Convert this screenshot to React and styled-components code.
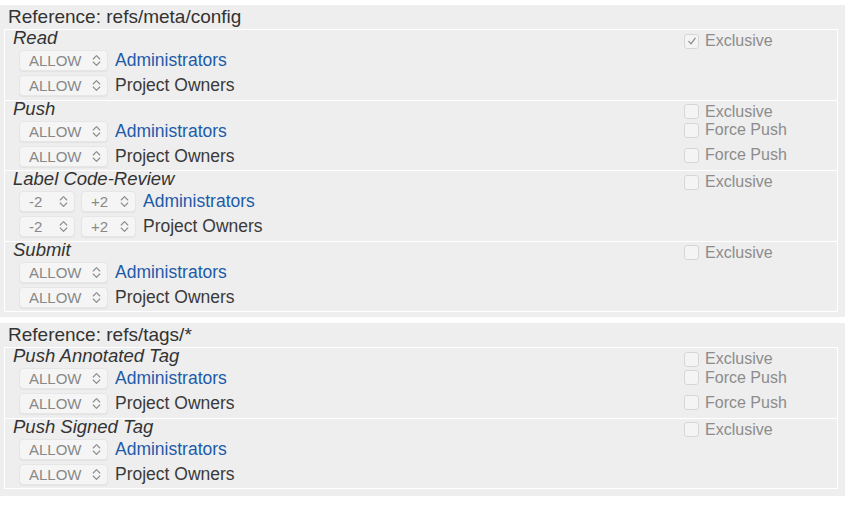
import React from 'react'
import styled, { createGlobalStyle } from 'styled-components'

const sections = [
    {
        ref: 'refs/meta/config',
        permissions: [
            { name: 'Read', exclusive: true },
            { name: 'Push', force: true },
            { name: 'Label Code-Review', range: true },
            { name: 'Submit' },
        ],
    },
    {
        ref: 'refs/tags/*',
        permissions: [
            { name: 'Push Annotated Tag', force: true },
            { name: 'Push Signed Tag' },
        ],
    },
]

const groups = [
    { name: 'Administrators', link: true },
    { name: 'Project Owners', link: false },
]

const GlobalStyle = createGlobalStyle`
    html, body {
        margin: 0;
        background: #ffffff;
    }
    body {
        padding: 5px 4px 0 0;
        font-family: "Liberation Sans", Arial, sans-serif;
        color: #3a3a3a;
    }
`

const Chevron = () => (
    <svg width="9" height="13" viewBox="0 0 9 13" fill="none" stroke="#8a8a8a" strokeWidth="1.1" strokeLinecap="round" strokeLinejoin="round">
        <path d="M1.2 5 L4.5 1.6 L7.8 5" />
        <path d="M1.2 8 L4.5 11.4 L7.8 8" />
    </svg>
)

const Check = () => (
    <svg width="12" height="12" viewBox="0 0 12 12" fill="none" stroke="#8a8a8a" strokeWidth="1.2" strokeLinecap="round" strokeLinejoin="round">
        <path d="M2.8 6.4 L5 8.8 L9.2 3.2" />
    </svg>
)

const Checkbox = ({ label, checked }) => (
    <CheckItem>
        <Box>{checked && <Check />}</Box>
        <span>{label}</span>
    </CheckItem>
)

const Select = ({ value, width }) => (
    <SelectBox $width={width}>
        <span>{value}</span>
        <Chevron />
    </SelectBox>
)

const Permission = ({ perm }) => (
    <Group>
        <TitleRow>
            <Title>{perm.name}</Title>
            <Checkbox label="Exclusive" checked={perm.exclusive} />
        </TitleRow>
        {groups.map((g) => (
            <Row key={g.name}>
                <RuleMain>
                    {perm.range ? (
                        <>
                            <Select value="-2" width={56} />
                            <Select value="+2" width={55} />
                        </>
                    ) : (
                        <Select value="ALLOW" width={89} />
                    )}
                    <GroupName $link={g.link}>{g.name}</GroupName>
                </RuleMain>
                {perm.force && <Checkbox label="Force Push" />}
            </Row>
        ))}
    </Group>
)

export default function App() {
    return (
        <>
            <GlobalStyle />
            {sections.map((s) => (
                <Section key={s.ref}>
                    <Header>Reference: {s.ref}</Header>
                    <Panel>
                        {s.permissions.map((p) => (
                            <Permission key={p.name} perm={p} />
                        ))}
                    </Panel>
                </Section>
            ))}
        </>
    )
}

const Section = styled.section`
    background: #eeeeee;
    padding: 0 7px 5px 4px;
    margin-bottom: 6px;

    &:last-child{
        padding-bottom: 7px;
        margin-bottom: 0;
    }
`

const Header = styled.div`
    height: 24px;
    line-height: 24px;
    padding-left: 4px;
    font-size: 19px;
    color: #333333;
`

const Panel = styled.div`
    border: 1px solid #ffffff;
    background: #eeeeee;
`

const Group = styled.div`
    height: 69.5px;
    border-bottom: 1px solid #ffffff;

    &:last-child{
        border-bottom: none;
    }
`

const TitleRow = styled.div`
    display: grid;
    grid-template-columns: 1fr 153px;
    height: 19.5px;
    align-items: start;
`

const Title = styled.div`
    padding-left: 8px;
    font-size: 18.5px;
    line-height: 15px;
    font-style: italic;
    color: #333333;
`

const Row = styled.div`
    display: grid;
    grid-template-columns: 1fr 153px;
    height: 25px;
    align-items: start;
`

const RuleMain = styled.div`
    display: flex;
    align-items: baseline;
    gap: 6px;
    padding: 0.5px 0 0 14px;
`

const SelectBox = styled.div`
    display: inline-flex;
    align-items: center;
    justify-content: space-between;
    box-sizing: border-box;
    width: ${(p) => p.$width}px;
    height: 21px;
    padding: 0 6px 0 9px;
    border: 1px solid #e6e6e6;
    border-radius: 4px;
    background: #f5f5f5;
    box-shadow: 0 1px 1px rgba(0, 0, 0, 0.05);
    font-size: 15px;
    line-height: 21px;
    color: #888888;

    svg{
        flex-shrink: 0;
    }
`

const GroupName = styled.span`
    margin-left: 1px;
    font-size: 17.5px;
    line-height: 21px;
    color: ${(p) => (p.$link ? '#1d5ba9' : '#3a3a3a')};
`

const CheckItem = styled.label`
    display: flex;
    align-items: center;
    gap: 6px;
    height: 18px;
    margin-top: 1px;
    font-size: 16px;
    line-height: 18px;
    color: #8c8c8c;

    ${TitleRow} &{
        margin-top: 2px;
    }
`

const Box = styled.span`
    display: inline-flex;
    align-items: center;
    justify-content: center;
    box-sizing: border-box;
    width: 15px;
    height: 15px;
    border: 1px solid #d6d6d6;
    border-radius: 3px;
    background: #f4f4f4;
`
